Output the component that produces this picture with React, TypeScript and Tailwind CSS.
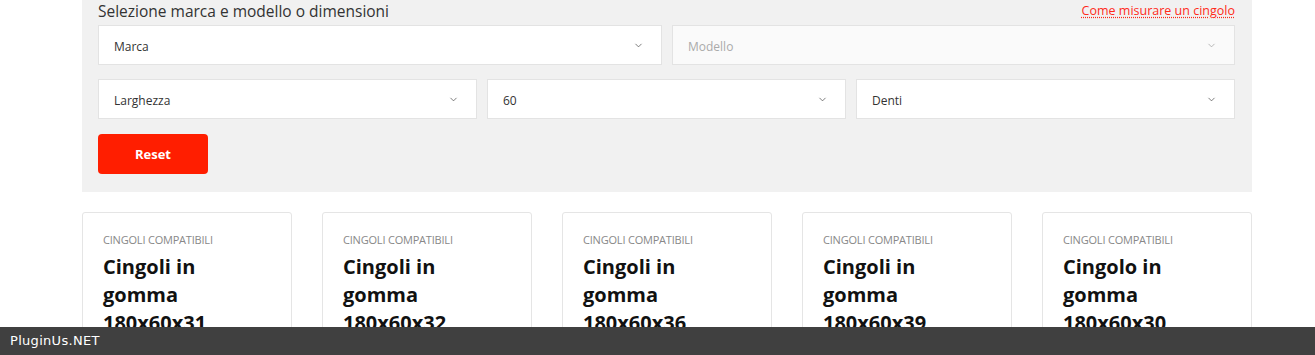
import { ChevronDown } from "lucide-react";

const cards = [
  "Cingoli in gomma 180x60x31",
  "Cingoli in gomma 180x60x32",
  "Cingoli in gomma 180x60x36",
  "Cingoli in gomma 180x60x39",
  "Cingolo in gomma 180x60x30",
];

function Select({
  label,
  className = "",
  disabled = false,
}: {
  label: string;
  className?: string;
  disabled?: boolean;
}) {
  return (
    <div
      className={`flex h-10 items-center justify-between border border-[#e3e3e3] pt-[3px] pl-[15px] pr-[17px] text-[12px] ${
        disabled ? "bg-[#fafafa] text-[#aaaaaa]" : "bg-white text-[#333333]"
      } ${className}`}
    >
      <span>{label}</span>
      <ChevronDown
        size={11}
        strokeWidth={1.5}
        className={`-mt-[3px] ${disabled ? "text-[#999999]" : "text-[#444444]"}`}
      />
    </div>
  );
}

export default function App() {
  return (
    <div
      className="min-h-[355px] bg-white"
      style={{ fontFamily: '"Open Sans", "Noto Sans", sans-serif' }}
    >
      <div className="mx-[82px] w-[1170px]">
        {/* Filter panel */}
        <section className="bg-[#f1f1f1] px-4 pb-[18px]">
          <div className="flex h-[21px] items-end justify-between pr-px">
            <h2 className="text-[15.5px] leading-5 font-medium text-[#333333]">
              Selezione marca e modello o dimensioni
            </h2>
            <a
              href="#"
              className="text-[12.5px] leading-5 text-[#ff2a1a] underline decoration-dotted underline-offset-2"
            >
              Come misurare un cingolo
            </a>
          </div>

          <div className="mt-1 flex gap-[10px] pr-px">
            <Select label="Marca" className="w-[564px]" />
            <Select label="Modello" className="flex-1" disabled />
          </div>

          <div className="mt-[14px] flex gap-[10px] pr-px">
            <Select label="Larghezza" className="w-[379px]" />
            <Select label="60" className="w-[359px]" />
            <Select label="Denti" className="flex-1" />
          </div>

          <button className="mt-[15px] h-10 w-[110px] rounded-[4px] bg-[#ff1e00] pt-px text-[13px] font-bold text-white">
            Reset
          </button>
        </section>

        {/* Product cards */}
        <div className="mt-[20px] flex gap-[30px]">
          {cards.map((title, i) => (
            <div
              key={i}
              className="h-[200px] w-[210px] rounded-[3px] border border-[#e5e5e5] bg-white px-5 pt-[19px]"
            >
              <div className="text-[11px] leading-4 tracking-[-0.2px] text-[#888888] uppercase">
                Cingoli compatibili
              </div>
              <h3 className="mt-[5px] text-[20px] leading-[28px] font-bold text-[#111111]">
                {title}
              </h3>
            </div>
          ))}
        </div>
      </div>

      {/* Bottom bar */}
      <div
        className="fixed right-0 bottom-0 left-0 flex h-[28px] items-center bg-[#404040] px-[10px] text-[13px] tracking-[0.3px] text-white"
        style={{ fontFamily: '"DejaVu Sans", sans-serif' }}
      >
        PluginUs.NET
      </div>
    </div>
  );
}
